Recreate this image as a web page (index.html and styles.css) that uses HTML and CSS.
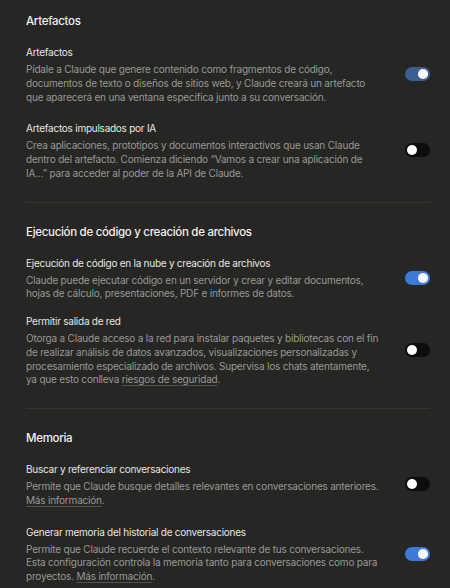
FILE: index.html
```html
<!DOCTYPE html>
<html lang="es">
<head>
    <meta charset="UTF-8">
    <meta name="viewport" content="width=device-width, initial-scale=1.0">
    <title>Configuración</title>
    <link rel="stylesheet" href="styles.css">
</head>
<body>
    <div class="settings">
        <section class="group">
            <h2>Artefactos</h2>
            <div class="option">
                <div class="text">
                    <h3>Artefactos</h3>
                    <p>Pídale a Claude que genere contenido como fragmentos de código, documentos de texto o diseños de sitios web, y Claude creará un artefacto que aparecerá en una ventana específica junto a su conversación.</p>
                </div>
                <span class="toggle on dim"></span>
            </div>
            <div class="option">
                <div class="text">
                    <h3>Artefactos impulsados por IA</h3>
                    <p>Crea aplicaciones, prototipos y documentos interactivos que usan Claude dentro del artefacto. Comienza diciendo “Vamos a crear una aplicación de IA...” para acceder al poder de la API de Claude.</p>
                </div>
                <span class="toggle"></span>
            </div>
        </section>

        <section class="group">
            <h2>Ejecución de código y creación de archivos</h2>
            <div class="option">
                <div class="text">
                    <h3>Ejecución de código en la nube y creación de archivos</h3>
                    <p>Claude puede ejecutar código en un servidor y crear y editar documentos, hojas de cálculo, presentaciones, PDF e informes de datos.</p>
                </div>
                <span class="toggle on"></span>
            </div>
            <div class="option sub">
                <div class="text">
                    <h3>Permitir salida de red</h3>
                    <p>Otorga a Claude acceso a la red para instalar paquetes y bibliotecas con el fin de realizar análisis de datos avanzados, visualizaciones personalizadas y procesamiento especializado de archivos. Supervisa los chats atentamente, ya que esto conlleva <a href="#">riesgos de seguridad</a>.</p>
                </div>
                <span class="toggle"></span>
            </div>
        </section>

        <section class="group">
            <h2>Memoria</h2>
            <div class="option">
                <div class="text">
                    <h3>Buscar y referenciar conversaciones</h3>
                    <p>Permite que Claude busque detalles relevantes en conversaciones anteriores. <a href="#">Más información</a>.</p>
                </div>
                <span class="toggle"></span>
            </div>
            <div class="option">
                <div class="text">
                    <h3>Generar memoria del historial de conversaciones</h3>
                    <p>Permite que Claude recuerde el contexto relevante de tus conversaciones. Esta configuración controla la memoria tanto para conversaciones como para proyectos. <a href="#">Más información</a>.</p>
                </div>
                <span class="toggle on"></span>
            </div>
        </section>
    </div>
</body>
</html>
```

FILE: styles.css
```css
*{
    margin: 0;
    padding: 0;
    box-sizing: border-box;
}
body{
    background-color: #262624;
    color: #e8e6e1;
    font-family: Inter, "Liberation Sans", sans-serif;
}
.settings{
    padding: 12px 20px 0 26px;
}
.group{
    padding-bottom: 21px;
    border-bottom: 1px solid #353532;
    margin-bottom: 20px;
}
.group:last-child{
    border-bottom: 0;
}
h2{
    font-size: 11.5px;
    font-weight: 500;
    letter-spacing: -0.3px;
    line-height: 18px;
    margin-bottom: 14px;
    color: #f2f0eb;
}
.option{
    display: flex;
    align-items: center;
    justify-content: space-between;
}
.option + .option{
    margin-top: 16px;
}
.option.sub{
    margin-top: 12px;
}
.text{
    width: 354px;
}
h3{
    font-size: 10px;
    font-weight: 400;
    letter-spacing: -0.25px;
    line-height: 16px;
    margin-bottom: 3px;
    color: #e8e6e1;
}
p{
    font-size: 10px;
    letter-spacing: -0.2px;
    line-height: 13.75px;
    color: #9a9893;
}
p a{
    color: #9a9893;
    text-decoration: underline;
    text-decoration-color: #55534f;
    text-underline-offset: 1.5px;
}
.toggle{
    flex: none;
    width: 25px;
    height: 14px;
    border-radius: 7px;
    background-color: #0d0d0c;
    position: relative;
}
.toggle::after{
    content: "";
    position: absolute;
    top: 2px;
    left: 2px;
    width: 10px;
    height: 10px;
    border-radius: 50%;
    background-color: #fff;
}
.toggle.on{
    background-color: #3d7ad8;
}
.toggle.on::after{
    left: 13px;
}
.toggle.dim{
    background-color: #3c5f93;
}
```
